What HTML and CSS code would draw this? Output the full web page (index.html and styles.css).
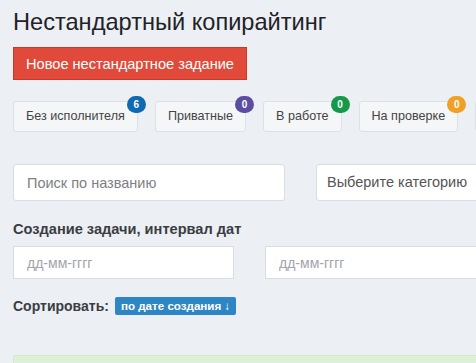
FILE: index.html
```html
<!DOCTYPE html>
<html lang="ru">
<head>
<meta charset="UTF-8">
<meta name="viewport" content="width=device-width, initial-scale=1.0">
<title>Нестандартный копирайтинг</title>
<link rel="stylesheet" href="styles.css">
</head>
<body>
<div class="page">
  <h1 class="title">Нестандартный копирайтинг</h1>
  <button class="btn-new">Новое нестандартное задание</button>

  <div class="tabs">
    <div class="tab">Без исполнителя<span class="badge badge-blue">6</span></div>
    <div class="tab">Приватные<span class="badge badge-purple">0</span></div>
    <div class="tab">В работе<span class="badge badge-green">0</span></div>
    <div class="tab">На проверке<span class="badge badge-orange">0</span></div>
    <div class="tab">Завершённые<span class="badge badge-blue">0</span></div>
  </div>

  <div class="filters">
    <input class="field field-search" type="text" placeholder="Поиск по названию">
    <div class="field field-select">Выберите категорию</div>
  </div>

  <div class="label">Создание задачи, интервал дат</div>
  <div class="dates">
    <input class="field field-date" type="text" placeholder="дд-мм-гггг">
    <input class="field field-date wide" type="text" placeholder="дд-мм-гггг">
  </div>

  <div class="sort">
    <span class="sort-label">Сортировать:</span>
    <span class="sort-tag">по дате создания &#8595;</span>
  </div>

  <div class="notice"></div>
</div>
</body>
</html>
```

FILE: styles.css
```css
html, body {
  margin: 0;
  padding: 0;
  overflow: hidden;
}

body {
  background-color: #eceff4;
  font-family: "Liberation Sans", Arial, sans-serif;
  color: #222;
}

.page {
  width: 640px;
  padding: 8px 0 0 13px;
}

.title {
  margin: 0;
  font-size: 23.6px;
  font-weight: normal;
  line-height: 28px;
  color: #1f2226;
}

.btn-new {
  margin-top: 11px;
  height: 33px;
  width: 234px;
  border: 1px solid #c9392a;
  background-color: #e14a3b;
  color: #fff;
  font-family: inherit;
  font-size: 14.6px;
  padding: 0;
  cursor: pointer;
}

.tabs {
  display: flex;
  gap: 17px;
  margin-top: 21px;
}

.tab {
  position: relative;
  flex: none;
  height: 29px;
  line-height: 29px;
  padding: 0 12px 0 12px;
  background-color: #f5f6f8;
  border: 1px solid #dde0e5;
  border-radius: 3px;
  font-size: 12.6px;
  color: #444;
}

.badge {
  position: absolute;
  top: -6px;
  right: -9px;
  width: 19px;
  height: 17px;
  border-radius: 9px;
  font-size: 10px;
  line-height: 17px;
  text-align: center;
  color: #fff;
  font-weight: bold;
}

.badge-blue { background-color: #0d6ab3; }
.badge-purple { background-color: #5b4ea1; }
.badge-green { background-color: #14994a; }
.badge-orange { background-color: #f0a025; }

.filters {
  display: flex;
  gap: 31px;
  margin-top: 32px;
}

.field {
  box-sizing: border-box;
  height: 37px;
  border: 1px solid #d9dde3;
  border-radius: 3px;
  background-color: #fff;
  font-family: inherit;
  font-size: 14.5px;
  padding: 0 13px;
  color: #555;
  outline: none;
}

.field::placeholder {
  color: #7c7f84;
}

.field-search {
  width: 272px;
}

.field-select {
  width: 272px;
  line-height: 35px;
  padding: 0 10px;
  color: #555;
}

.label {
  margin-top: 20px;
  font-size: 14.6px;
  font-weight: bold;
  color: #3a3d42;
}

.dates {
  display: flex;
  gap: 31px;
  margin-top: 9px;
}

.field-date {
  width: 221px;
  height: 33px;
  border-radius: 0;
  font-size: 14px;
}

.field-date::placeholder {
  color: #a2a5aa;
}

.field-date.wide {
  width: 240px;
}

.sort {
  display: flex;
  align-items: center;
  gap: 6px;
  margin-top: 18px;
}

.sort-label {
  font-size: 14px;
  font-weight: bold;
  color: #3a3d42;
}

.sort-tag {
  background-color: #2f86c4;
  color: #fff;
  font-size: 11.6px;
  font-weight: bold;
  padding: 2px 6px 3px;
  border-radius: 2px;
}

.notice {
  margin-top: 40px;
  height: 40px;
  width: 620px;
  background-color: #dff0d8;
  border: 1px solid #d3e9c8;
}
```
